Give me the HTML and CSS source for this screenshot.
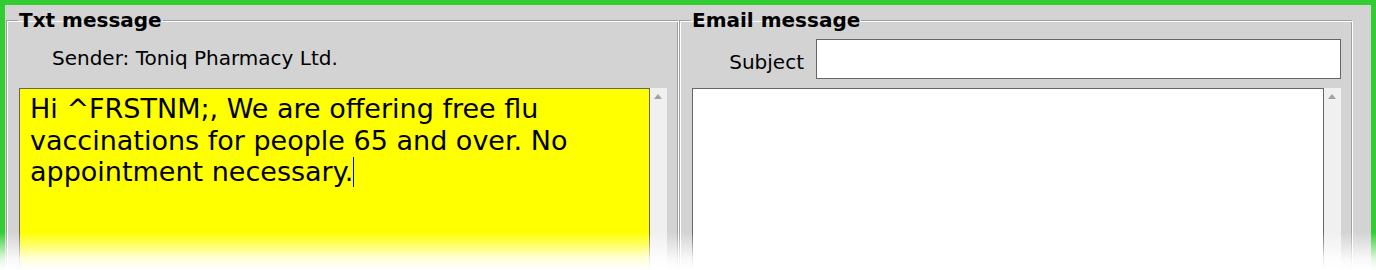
FILE: index.html
```html
<!DOCTYPE html>
<html>
<head>
<meta charset="utf-8">
<link rel="stylesheet" href="styles.css">
</head>
<body>
<div class="frame">
  <fieldset class="group group-txt">
    <legend>Txt message</legend>
    <div class="row row-sender">Sender: Toniq Pharmacy Ltd.</div>
    <div class="editor">
      <div class="box box-yellow">Hi ^FRSTNM;, We are offering free flu vaccinations for people 65 and over. No appointment necessary.<span class="caret"></span></div>
      <div class="scrollbar"><span class="arrow"></span></div>
    </div>
  </fieldset>
  <fieldset class="group group-email">
    <legend>Email message</legend>
    <div class="row row-subject">
      <label class="subject-label">Subject</label>
      <div class="subject-input"></div>
    </div>
    <div class="editor">
      <div class="box box-white"></div>
      <div class="scrollbar"><span class="arrow"></span></div>
    </div>
  </fieldset>
</div>
<div class="fade"></div>
</body>
</html>
```
FILE: styles.css
```css
html, body {
  margin: 0;
  padding: 0;
  height: 270px;
  overflow: hidden;
  background: #ffffff;
}

body {
  font-family: "DejaVu Sans", Verdana, sans-serif;
  color: #000;
}

.frame {
  border: 5px solid #32cd32;
  background: #d3d3d3;
  height: 320px;
  padding: 5px 18px 0 1px;
  display: grid;
  grid-template-columns: 673px 674px;
  column-gap: 0;
  align-items: start;
}

.group {
  margin: 0;
  padding: 0 11px 0 12px;
  border: 1px solid #a0a0a0;
  border-right-color: #ffffff;
  border-bottom-color: #ffffff;
  box-shadow: inset 1px 1px 0 #ffffff, inset -1px -1px 0 #a0a0a0;
  height: 300px;
  min-width: 0;
}

.group legend {
  font-weight: bold;
  font-size: 20px;
  line-height: 20px;
  padding: 0 1px;
  margin-left: -1px;
}

.row {
  height: 40px;
  margin-top: 9px;
  display: flex;
  align-items: center;
}

.row-sender {
  font-size: 20px;
  padding-left: 33px;
  padding-bottom: 2px;
  box-sizing: border-box;
}

.subject-label {
  font-size: 20px;
  width: 124px;
  text-align: right;
  padding: 6px 12px 0 0;
  box-sizing: border-box;
}

.subject-input {
  flex: 1;
  height: 40px;
  box-sizing: border-box;
  background: #ffffff;
  border: 1px solid #666666;
}

.editor {
  margin-top: 9px;
  display: flex;
  height: 200px;
}

.box {
  flex: 1;
  border: 1px solid #666666;
  box-sizing: border-box;
}

.box-yellow {
  background: #ffff00;
  font-size: 27px;
  line-height: 31.5px;
  padding: 4px 10px 0 10px;
}

.box-white {
  background: #ffffff;
}

.caret {
  display: inline-block;
  width: 1px;
  height: 30px;
  background: #0000ff;
  vertical-align: -6px;
  margin-left: 0;
}

.scrollbar {
  width: 17px;
  background: #f0f0f0;
  position: relative;
}

.arrow {
  position: absolute;
  left: 4px;
  top: 6px;
  width: 0;
  height: 0;
  border-left: 4.5px solid transparent;
  border-right: 4.5px solid transparent;
  border-bottom: 5px solid #a3a3a3;
}

.fade {
  position: absolute;
  left: 0;
  top: 232px;
  width: 100%;
  height: 38px;
  background: linear-gradient(to bottom, rgba(255,255,255,0) 0%, rgba(255,255,255,0.85) 70%, #ffffff 100%);
}
```
